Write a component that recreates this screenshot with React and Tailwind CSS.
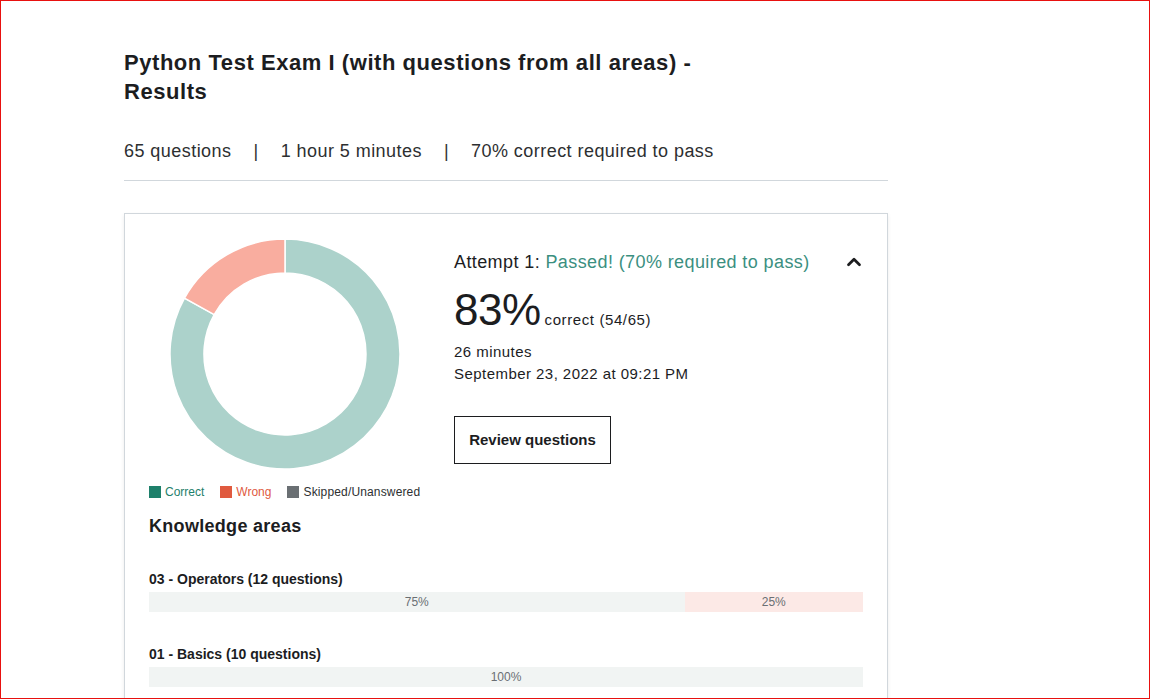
import React from 'react';
import { ChevronUp } from 'lucide-react';

const areas = [
  { name: '03 - Operators (12 questions)', correct: 75, wrong: 25 },
  { name: '01 - Basics (10 questions)', correct: 100, wrong: 0 },
];

function Donut() {
  return (
    <svg width="230" height="230" viewBox="0 0 230 230">
      <path
        d="M115 0 A115 115 0 1 1 14.5 59.1 L44.2 75.6 A81 81 0 1 0 115 34 Z"
        fill="#acd2cb"
        stroke="#fff"
        strokeWidth="1.5"
      />
      <path
        d="M14.5 59.1 A115 115 0 0 1 115 0 L115 34 A81 81 0 0 0 44.2 75.6 Z"
        fill="#f9ad9f"
        stroke="#fff"
        strokeWidth="1.5"
      />
    </svg>
  );
}

export default function App() {
  return (
    <div className="w-[1150px] h-[699px] border border-[#e8110f] bg-white overflow-hidden font-['Liberation_Sans',Arial,sans-serif] text-[#1c1d1f]">
      <div className="ml-[123px] w-[764px] pt-[47px]">
        {/* Header */}
        <h1 className="text-[22px] leading-[29px] font-bold w-[620px] tracking-[0.55px]">
          Python Test Exam I (with questions from all areas) - Results
        </h1>
        <div className="mt-[32px] flex items-center text-[18px] leading-[26px] text-[#2d2f31] tracking-[0.45px]">
          <span>65 questions</span>
          <span className="mx-[22px]">|</span>
          <span>1 hour 5 minutes</span>
          <span className="mx-[22px]">|</span>
          <span>70% correct required to pass</span>
        </div>
        <div className="mt-[16px] border-t border-[#d1d7dc]" />

        {/* Result card */}
        <div className="mt-[32px] border border-[#d1d7dc] shadow-[0_2px_4px_rgba(0,0,0,0.08)] px-[24px] pt-[25px] pb-10">
          <div className="flex">
            <div className="w-[272px] flex flex-col">
              <div className="flex justify-center">
                <Donut />
              </div>
              <div className="mt-[16px] flex items-center text-[12px] leading-[14px]">
                <span className="w-[12px] h-[12px] bg-[#1e806b] mr-[4px]" />
                <span className="text-[#1e806b] mr-[16px]">Correct</span>
                <span className="w-[12px] h-[12px] bg-[#e05a3f] mr-[4px]" />
                <span className="text-[#e05a3f] mr-[16px]">Wrong</span>
                <span className="w-[12px] h-[12px] bg-[#6a6f73] mr-[4px]" />
                <span className="text-[#2d2f31] tracking-[0.15px]">Skipped/Unanswered</span>
              </div>
            </div>
            <div className="ml-[33px] flex-1 pt-[11px]">
              <div className="flex items-center justify-between">
                <div className="text-[18px] leading-[24px] tracking-[0.4px]">
                  Attempt 1: <span className="text-[#3b8f7f]">Passed! (70% required to pass)</span>
                </div>
                <ChevronUp size={22} strokeWidth={3} className="mr-[-2px] text-[#1c1d1f]" />
              </div>
              <div className="mt-[10px] flex items-baseline">
                <span className="text-[44px] leading-[52px] tracking-[-0.5px]">83%</span>
                <span className="ml-[4px] text-[15px] tracking-[0.6px]">correct (54/65)</span>
              </div>
              <div className="mt-[5px] text-[15px] leading-[22px] tracking-[0.45px]">26 minutes</div>
              <div className="text-[15px] leading-[22px] tracking-[0.45px]">September 23, 2022 at 09:21 PM</div>
              <button className="mt-[31px] w-[157px] h-[48px] border border-[#1c1d1f] text-[15px] font-bold">
                Review questions
              </button>
            </div>
          </div>

          <h2 className="mt-[15px] text-[18px] leading-[24px] font-bold tracking-[0.3px]">Knowledge areas</h2>

          <div className="mt-[31px] flex flex-col gap-[32px]">
            {areas.map((a) => (
              <div key={a.name}>
                <div className="text-[14px] leading-[20px] font-bold">{a.name}</div>
                <div className="mt-[3px] h-[20px] flex text-[12px] text-[#6a6f73]">
                  <div
                    className="bg-[#f1f4f3] flex items-center justify-center"
                    style={{ width: a.correct + '%' }}
                  >
                    {a.correct}%
                  </div>
                  {a.wrong > 0 && (
                    <div
                      className="bg-[#fce9e6] flex items-center justify-center"
                      style={{ width: a.wrong + '%' }}
                    >
                      {a.wrong}%
                    </div>
                  )}
                </div>
              </div>
            ))}
          </div>
        </div>
      </div>
    </div>
  );
}
